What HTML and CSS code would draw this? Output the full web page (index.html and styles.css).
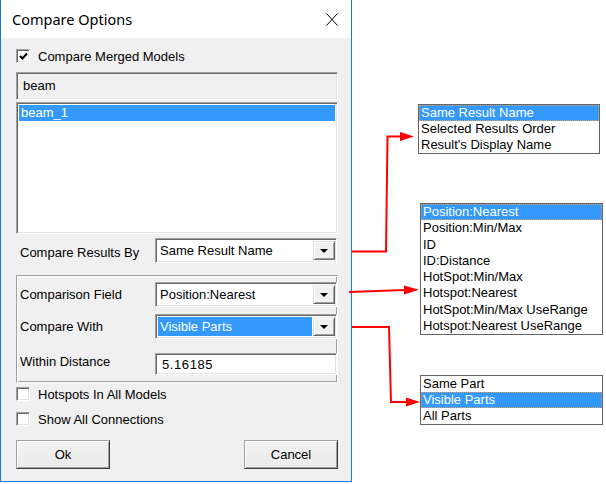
FILE: index.html
```html
<!DOCTYPE html>
<html>
<head>
<meta charset="utf-8">
<link rel="stylesheet" href="styles.css">
</head>
<body>
<div class="page">
  <div class="dialog">
    <div class="titlebar">
      <span class="title">Compare Options</span>
      <svg class="close" width="12" height="13" viewBox="0 0 12 13"><path d="M0.5 0.5 L11.5 12.5 M11.5 0.5 L0.5 12.5" stroke="#000" stroke-width="1" fill="none"/></svg>
    </div>
    <div class="body">
      <label class="check row-merged"><span class="box checked"><svg width="9" height="9" viewBox="0 0 9 9"><path d="M1 4 L3.5 6.5 L8 1.5" stroke="#000" stroke-width="2" fill="none"/></svg></span>Compare Merged Models</label>
      <div class="field readonly">beam</div>
      <div class="listbox"><div class="item sel">beam_1</div></div>
      <div class="formrow results">
        <span class="lbl">Compare Results By</span>
        <div class="combo"><span class="val">Same Result Name</span><span class="drop"><i></i></span></div>
      </div>
      <div class="group">
        <div class="formrow">
          <span class="lbl">Comparison Field</span>
          <div class="combo"><span class="val">Position:Nearest</span><span class="drop"><i></i></span></div>
        </div>
        <div class="formrow">
          <span class="lbl">Compare With</span>
          <div class="combo"><span class="val hl">Visible Parts</span><span class="drop"><i></i></span></div>
        </div>
        <div class="formrow dist">
          <span class="lbl">Within Distance</span>
          <div class="edit">5.16185</div>
        </div>
      </div>
      <label class="check row-hot"><span class="box"></span>Hotspots In All Models</label>
      <label class="check row-show"><span class="box"></span>Show All Connections</label>
      <div class="buttons">
        <button class="btn">Ok</button>
        <button class="btn">Cancel</button>
      </div>
    </div>
  </div>
  <div class="canvas">
    <ul class="popup p1">
      <li class="sel">Same Result Name</li>
      <li>Selected Results Order</li>
      <li>Result's Display Name</li>
    </ul>
    <ul class="popup p2">
      <li class="sel">Position:Nearest</li>
      <li>Position:Min/Max</li>
      <li>ID</li>
      <li>ID:Distance</li>
      <li>HotSpot:Min/Max</li>
      <li>Hotspot:Nearest</li>
      <li>HotSpot:Min/Max UseRange</li>
      <li>Hotspot:Nearest UseRange</li>
    </ul>
    <ul class="popup p3">
      <li>Same Part</li>
      <li class="sel">Visible Parts</li>
      <li>All Parts</li>
    </ul>
  </div>
  <svg class="arrows" width="606" height="484" viewBox="0 0 606 484">
    <g stroke="#ff0000" stroke-width="2" fill="none">
      <path d="M352 251.5 H386 L387.5 136.5 H402"/>
      <path d="M349 292 L405 290"/>
      <path d="M352 327 H389 L391 402 H408"/>
    </g>
    <g fill="#ff0000">
      <polygon points="400,132 414,136.5 400,141"/>
      <polygon points="404,285.5 419,289.8 404,294.5"/>
      <polygon points="406,397.5 420,402 406,406.5"/>
    </g>
  </svg>
</div>
</body>
</html>
```
FILE: styles.css
```css
html, body {
  margin: 0;
  padding: 0;
  background: #fff;
}
.page {
  position: relative;
  width: 606px;
  height: 484px;
  display: flex;
  font-family: "Liberation Sans", Arial, sans-serif;
  font-size: 13px;
  color: #000;
  overflow: hidden;
}
.dialog {
  width: 352px;
  height: 482px;
  box-sizing: border-box;
  border: 1px solid #1979d3;
  border-top: none;
  display: flex;
  flex-direction: column;
  flex: none;
}
.titlebar {
  height: 38px;
  background: #fff;
  display: flex;
  align-items: center;
  justify-content: space-between;
  padding: 0 13px 0 11px;
  flex: none;
}
.title {
  font-family: "Noto Sans", sans-serif;
  font-size: 14.5px;
  color: #000;
  margin-top: -1px;
}
.close {
  display: block;
  margin-top: 1px;
}
.body {
  flex: 1;
  background: #f0f0f0;
  padding: 10px 13px 0 15px;
  display: flex;
  flex-direction: column;
}
.check {
  display: flex;
  align-items: center;
  height: 16px;
  gap: 8px;
}
.box {
  width: 14px;
  height: 14px;
  box-sizing: border-box;
  background: #fff;
  border: 1px solid;
  border-color: #a0a0a0 #fff #fff #a0a0a0;
  box-shadow: inset 1px 1px #696969, inset -1px -1px #e3e3e3;
  display: flex;
  align-items: center;
  justify-content: center;
  flex: none;
}
.box svg { display: block; }
.field, .listbox, .combo, .edit {
  box-sizing: border-box;
  border: 1px solid;
  border-color: #a0a0a0 #fff #fff #a0a0a0;
  box-shadow: inset 1px 1px #696969, inset -1px -1px #e3e3e3;
}
.field.readonly {
  margin-top: 8px;
  height: 28px;
  background: #f0f0f0;
  padding: 0 0 2px 6px;
  display: flex;
  align-items: center;
}
.listbox {
  margin-top: 2px;
  height: 132px;
  background: #fff;
  padding: 2px;
}
.listbox .item {
  height: 16px;
  line-height: 16px;
  padding-left: 2px;
}
.sel {
  background: #3399ff;
  color: #fff;
}
.formrow {
  display: grid;
  grid-template-columns: 139px 182px;
  align-items: center;
}
.formrow .lbl {
  padding-left: 4px;
}
.results {
  margin-top: 4px;
}
.results .lbl {
  padding-top: 3px;
}
.combo {
  height: 25px;
  background: #fff;
  display: flex;
  align-items: center;
  padding: 2px 1px 2px 2px;
}
.combo .val {
  flex: 1;
  align-self: stretch;
  display: flex;
  align-items: center;
  padding-left: 2px;
  margin-right: 1px;
}
.combo .val.hl {
  background: #3399ff;
  color: #fff;
}
.drop {
  width: 22px;
  height: 19px;
  box-sizing: border-box;
  background: #f0f0f0;
  border: 1px solid;
  border-color: #e3e3e3 #696969 #696969 #e3e3e3;
  box-shadow: inset 1px 1px #fff, inset -1px -1px #a0a0a0;
  display: flex;
  align-items: center;
  justify-content: center;
  flex: none;
}
.drop i {
  display: block;
  width: 0;
  height: 0;
  border-left: 4px solid transparent;
  border-right: 4px solid transparent;
  border-top: 4px solid #000;
  margin-top: 1px;
}
.group {
  margin-top: 12px;
  height: 108px;
  box-sizing: border-box;
  border: 1px solid;
  border-color: #a0a0a0 #fff #fff #a0a0a0;
  box-shadow: inset 1px 1px #fff, inset -1px -1px #a0a0a0;
  padding: 6px 0 0 0;
  display: flex;
  flex-direction: column;
  gap: 7px;
}
.group .formrow {
  grid-template-columns: 138px 182px;
}
.group .formrow .lbl {
  padding-left: 3px;
}
.group .dist {
  margin-top: 7px;
}
.group .dist .lbl {
  padding-bottom: 5px;
}
.edit {
  height: 22px;
  background: #fff;
  display: flex;
  align-items: center;
  padding-left: 6px;
  letter-spacing: 0.6px;
}
.row-hot {
  margin-top: 3px;
}
.row-show {
  margin-top: 9px;
}
.buttons {
  margin-top: 13px;
  display: flex;
  justify-content: space-between;
}
.btn {
  width: 94px;
  height: 29px;
  box-sizing: border-box;
  font-family: "Liberation Sans", Arial, sans-serif;
  font-size: 13px;
  color: #000;
  background: linear-gradient(#f2f2f2, #ebebeb);
  border: 1px solid;
  border-color: #a0a0a0 #3c3c3c #3c3c3c #a0a0a0;
  box-shadow: inset 1px 1px #fff, inset -1px -1px #a0a0a0;
  padding: 0;
}
.canvas {
  position: relative;
  flex: 1;
}
.popup {
  position: absolute;
  margin: 0;
  padding: 0;
  list-style: none;
  background: #fff;
  border: 1px solid #646464;
  box-sizing: border-box;
}
.popup li {
  height: 16px;
  line-height: 16px;
  padding-left: 2px;
  white-space: nowrap;
}
.popup li.sel {
  outline: 1px dotted #e0a060;
  outline-offset: -1px;
}
.p1 {
  left: 66px;
  top: 104px;
  width: 182px;
}
.p2 {
  left: 68px;
  top: 203px;
  width: 183px;
}
.p2 li {
  height: 16.25px;
  line-height: 16.25px;
}
.p3 {
  left: 68px;
  top: 375px;
  width: 183px;
}
.arrows {
  position: absolute;
  left: 0;
  top: 0;
  pointer-events: none;
}
```
